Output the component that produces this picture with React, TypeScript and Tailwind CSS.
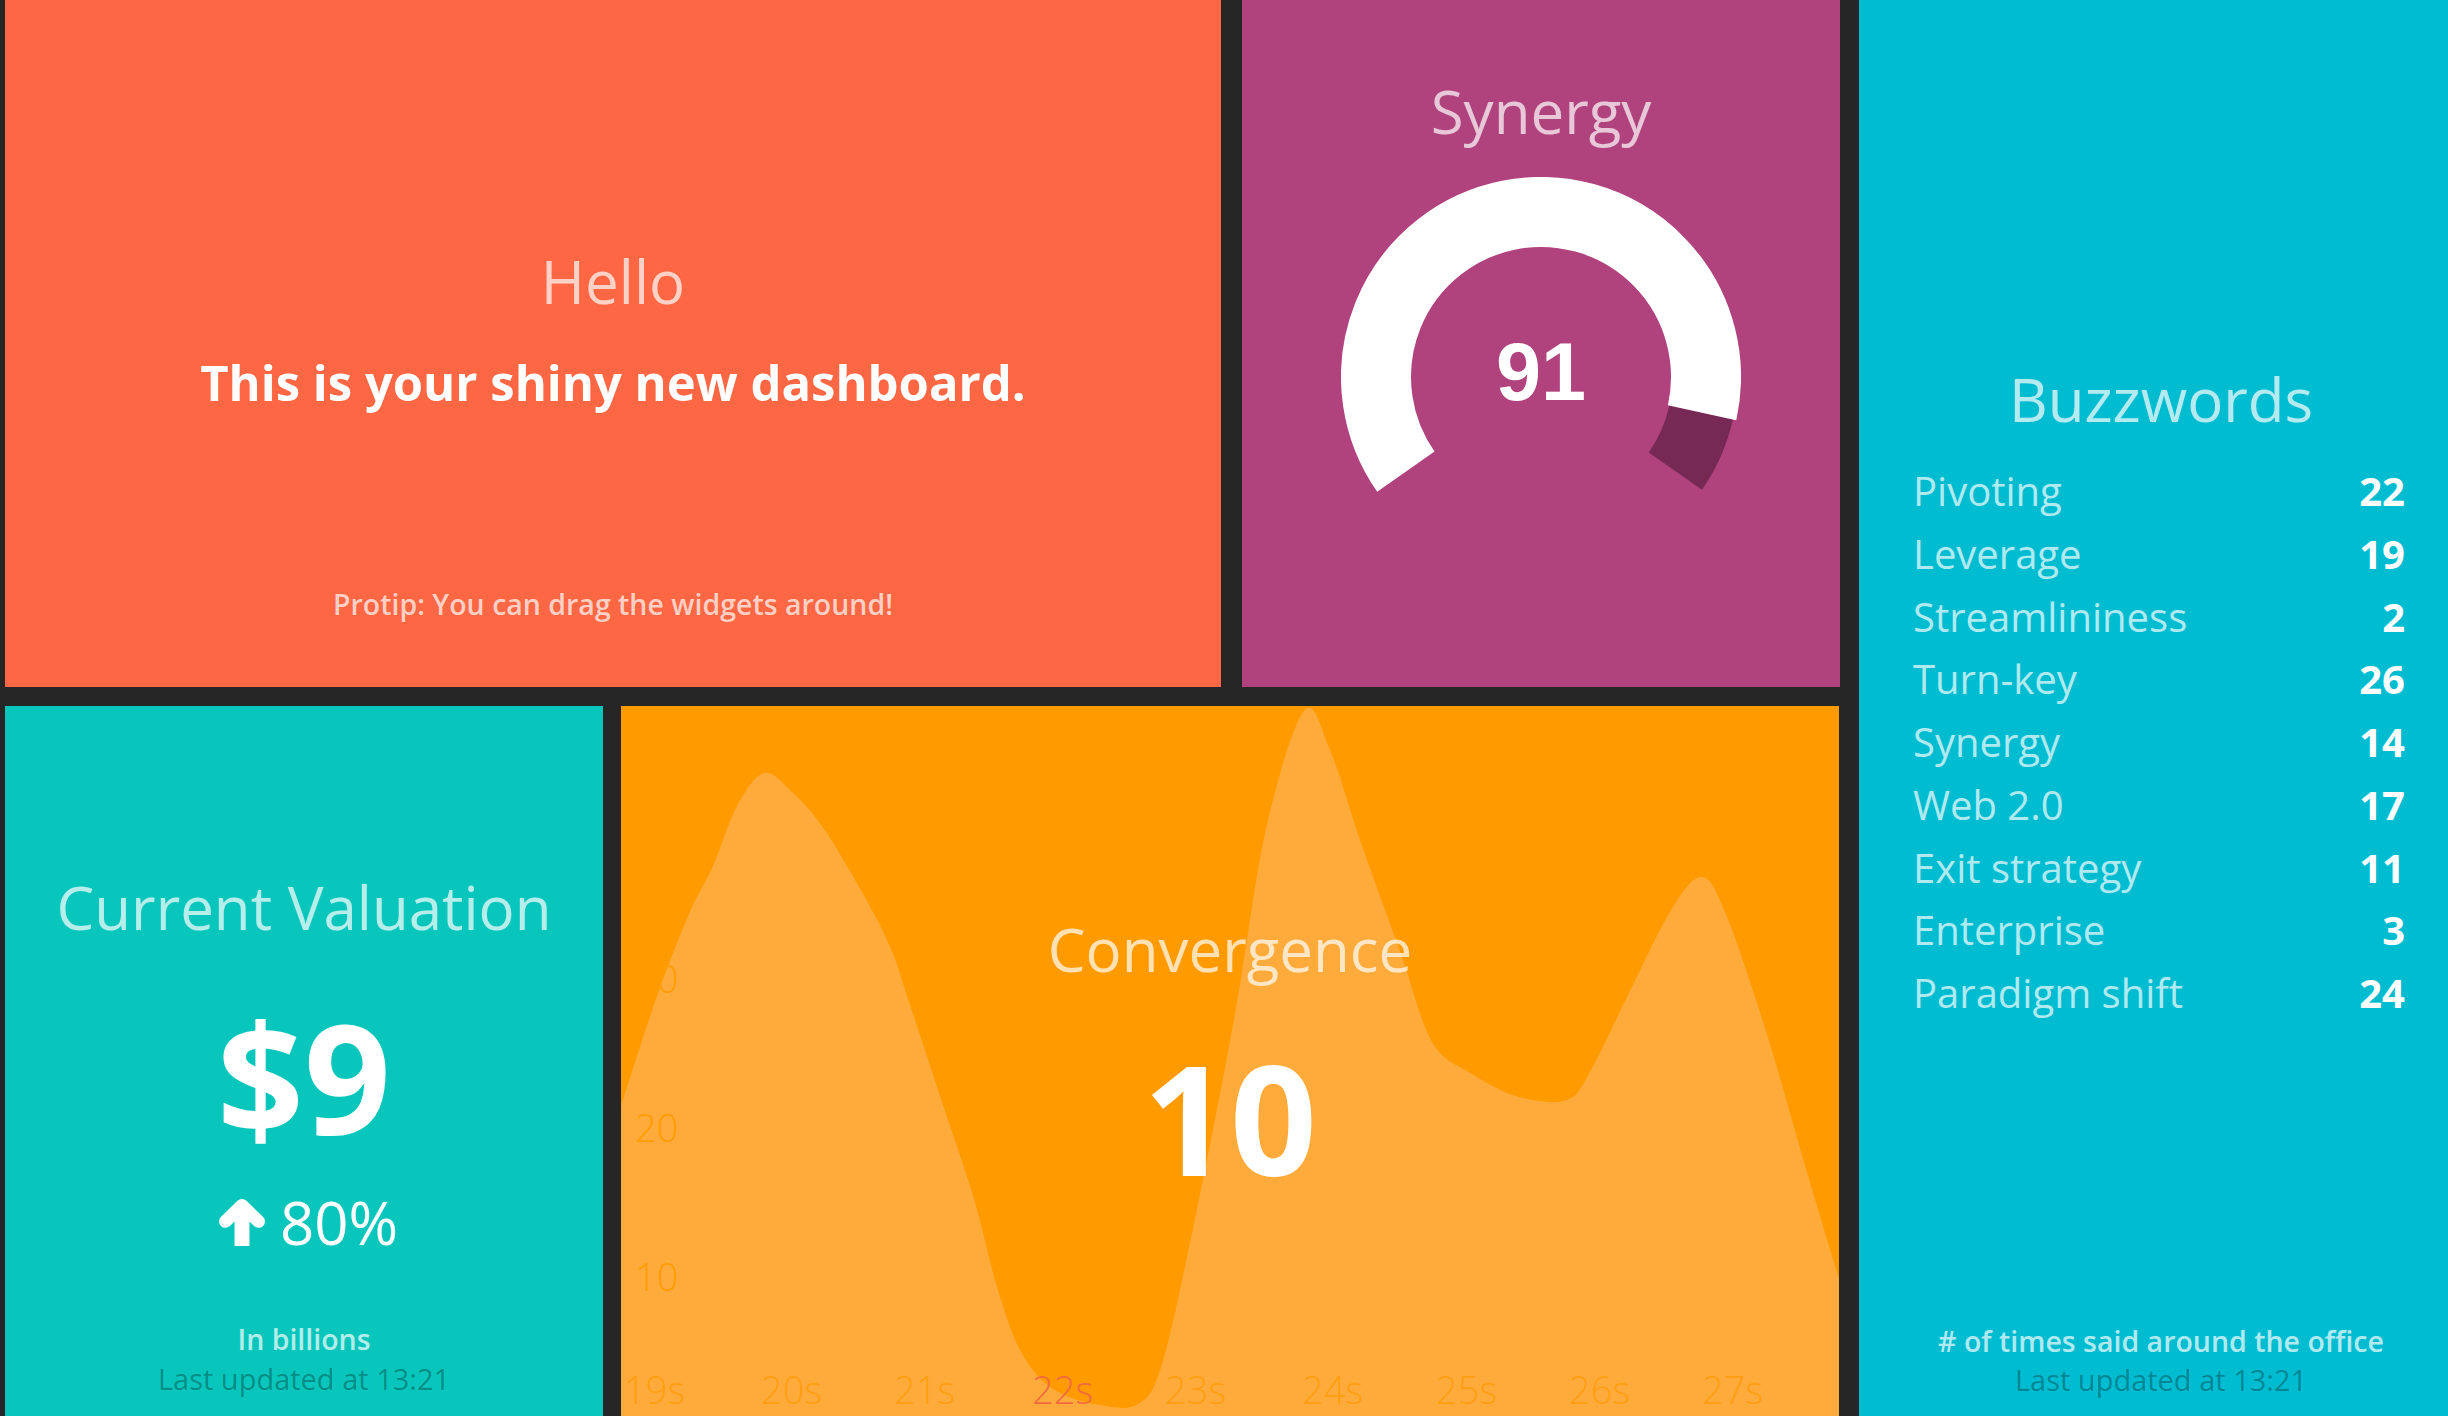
const BUZZWORDS = [
  { label: "Pivoting", value: 22 },
  { label: "Leverage", value: 19 },
  { label: "Streamlininess", value: 2 },
  { label: "Turn-key", value: 26 },
  { label: "Synergy", value: 14 },
  { label: "Web 2.0", value: 17 },
  { label: "Exit strategy", value: 11 },
  { label: "Enterprise", value: 3 },
  { label: "Paradigm shift", value: 24 },
];

// outline of the convergence area, in panel coordinates (1218 x 710)
const AREA: [number, number][] = [
  [0, 400], [36, 290], [68, 208], [92, 160], [116, 100], [143, 67], [171, 86],
  [203, 123], [242, 188], [270, 243], [289, 299], [321, 396], [353, 493],
  [376, 581], [400, 646], [432, 683], [479, 699], [519, 697], [543, 651],
  [578, 493], [614, 308], [645, 123], [683, 5], [709, 44], [740, 137],
  [780, 248], [811, 336], [851, 368], [898, 391], [946, 394], [970, 364],
  [1009, 285], [1049, 206], [1080, 171], [1104, 206], [1144, 322],
  [1183, 456], [1215, 563], [1218, 572],
];

const Y_LABELS = [
  { text: "40", top: "top-[101px]" },
  { text: "30", top: "top-[253px]" },
  { text: "20", top: "top-[402px]" },
  { text: "10", top: "top-[551px]" },
];

const X_LABELS = [
  { text: "19s", left: "left-[3px]" },
  { text: "20s", left: "left-[140px]" },
  { text: "21s", left: "left-[273px]" },
  { text: "22s", left: "left-[411px]", hot: true },
  { text: "23s", left: "left-[544px]" },
  { text: "24s", left: "left-[681px]" },
  { text: "25s", left: "left-[815px]" },
  { text: "26s", left: "left-[948px]" },
  { text: "27s", left: "left-[1081px]" },
];

function smoothPath(pts: [number, number][]) {
  let d = `M${pts[0][0]},${pts[0][1]}`;
  for (let i = 0; i < pts.length - 1; i++) {
    const p0 = pts[i - 1] ?? pts[i];
    const p1 = pts[i];
    const p2 = pts[i + 1];
    const p3 = pts[i + 2] ?? p2;
    const c1x = p1[0] + (p2[0] - p0[0]) / 6;
    const c1y = p1[1] + (p2[1] - p0[1]) / 6;
    const c2x = p2[0] - (p3[0] - p1[0]) / 6;
    const c2y = p2[1] - (p3[1] - p1[1]) / 6;
    d += ` C${c1x.toFixed(1)},${c1y.toFixed(1)} ${c2x.toFixed(1)},${c2y.toFixed(1)} ${p2[0]},${p2[1]}`;
  }
  return d;
}

// angle in degrees, clockwise from 12 o'clock
function polar(deg: number, r = 165) {
  const a = (deg * Math.PI) / 180;
  return `${(200 + r * Math.sin(a)).toFixed(2)} ${(200 - r * Math.cos(a)).toFixed(2)}`;
}

function Gauge({ value }: { value: number }) {
  const start = 235;
  const end = start + 250;
  const at = start + (250 * value) / 100;
  return (
    <div className="relative mt-[36px] h-[320px] w-[400px]">
      <svg width="400" height="320" viewBox="0 0 400 320" className="block">
        <path
          d={`M${polar(at, 164)} A164 164 0 0 1 ${polar(end, 164)}`}
          fill="none"
          stroke="#772956"
          strokeWidth="65"
        />
        <path
          d={`M${polar(start)} A165 165 0 ${at - start > 180 ? 1 : 0} 1 ${polar(at)}`}
          fill="none"
          stroke="#ffffff"
          strokeWidth="70"
        />
      </svg>
      <div className="absolute left-0 right-0 top-[155px] text-center font-['Liberation_Sans',Arial,sans-serif] text-[81px] font-bold leading-none text-white">
        {value}
      </div>
    </div>
  );
}

function ArrowUp() {
  return (
    <svg width="48" height="48" viewBox="0 0 45 45" className="block">
      <path d="M22.5 12V45" stroke="#fff" strokeWidth="14" />
      <path
        d="M7 22L22.5 7L38 22"
        fill="none"
        stroke="#fff"
        strokeWidth="12"
        strokeLinecap="round"
        strokeLinejoin="round"
      />
    </svg>
  );
}

export default function App() {
  return (
    <div className="flex h-[1416px] w-[2448px] overflow-hidden bg-[#262626] pl-[5px] font-['Open_Sans',sans-serif]">
      <div className="flex w-[1836px] shrink-0 flex-col gap-[19px]">
        {/* top row */}
        <div className="flex h-[687px] shrink-0 gap-[21px]">
          <div className="flex w-[1216px] flex-col items-center bg-[#fe6743] pt-[251px] text-center">
            <h1 className="text-[60px] font-normal leading-none text-white/70">Hello</h1>
            <p className="mt-[47px] text-[49px] font-bold leading-none text-white">
              This is your shiny new dashboard.
            </p>
            <p className="mt-[183px] text-[28.5px] font-semibold leading-none text-white/70">
              Protip: You can drag the widgets around!
            </p>
          </div>

          <div className="flex w-[598px] flex-col items-center bg-[#b0437d] pt-[81px]">
            <h1 className="text-[60px] font-normal leading-none text-white/70">Synergy</h1>
            <Gauge value={91} />
          </div>
        </div>

        {/* bottom row */}
        <div className="flex flex-1 gap-[18px]">
          <div className="flex w-[598px] flex-col items-center bg-[#08c6bc] pt-[171px] text-center">
            <h1 className="text-[60px] font-normal leading-none text-white/70">Current Valuation</h1>
            <p className="mt-[64px] text-[152px] font-bold leading-none text-white">$9</p>
            <div className="mt-[39px] flex items-center gap-[14px] pl-[8px] text-white">
              <ArrowUp />
              <span className="text-[60px] leading-none">80%</span>
            </div>
            <p className="mt-[73px] text-[28.5px] font-semibold leading-none text-white/70">In billions</p>
            <p className="mt-[10px] text-[29px] leading-none text-black/30">Last updated at 13:21</p>
          </div>

          <div className="relative w-[1218px] overflow-hidden bg-[#ff9b00]">
            <svg
              width="1218"
              height="710"
              viewBox="0 0 1218 710"
              className="absolute left-0 top-0"
            >
              <path d={`${smoothPath(AREA)} L1218,710 L0,710 Z`} fill="#ffab3c" />
            </svg>
            {Y_LABELS.map((l) => (
              <span
                key={l.text}
                className={`absolute left-[14px] ${l.top} text-[38px] font-light leading-none text-[#ff9c00]`}
              >
                {l.text}
              </span>
            ))}
            {X_LABELS.map((l) => (
              <span
                key={l.text}
                className={`absolute top-[664px] ${l.left} text-[38px] font-light leading-none ${
                  l.hot ? "text-[#f26a3e]" : "text-[#ff9e10]"
                }`}
              >
                {l.text}
              </span>
            ))}
            <div className="relative flex flex-col items-center pt-[213px] text-center">
              <h1 className="text-[60px] font-normal leading-none text-white/70">Convergence</h1>
              <p className="mt-[63px] text-[152px] font-bold leading-none text-white">10</p>
            </div>
          </div>
        </div>
      </div>

      {/* buzzwords list */}
      <div className="ml-[18px] flex w-[604px] shrink-0 flex-col bg-[#00bcd1]">
        <h1 className="pt-[369px] text-center text-[60px] font-normal leading-none text-white/70">
          Buzzwords
        </h1>
        <ul className="mt-[31px] pl-[54px] pr-[58px]">
          {BUZZWORDS.map((b) => (
            <li key={b.label} className="flex justify-between text-[40px] leading-[62.75px]">
              <span className="text-white/70">{b.label}</span>
              <span className="font-bold text-white">{b.value}</span>
            </li>
          ))}
        </ul>
        <div className="mt-auto flex flex-col items-center pb-[22px] text-center">
          <p className="text-[28.5px] font-semibold leading-none text-white/70">
            # of times said around the office
          </p>
          <p className="mt-[10px] text-[29px] leading-none text-black/30">Last updated at 13:21</p>
        </div>
      </div>
    </div>
  );
}
